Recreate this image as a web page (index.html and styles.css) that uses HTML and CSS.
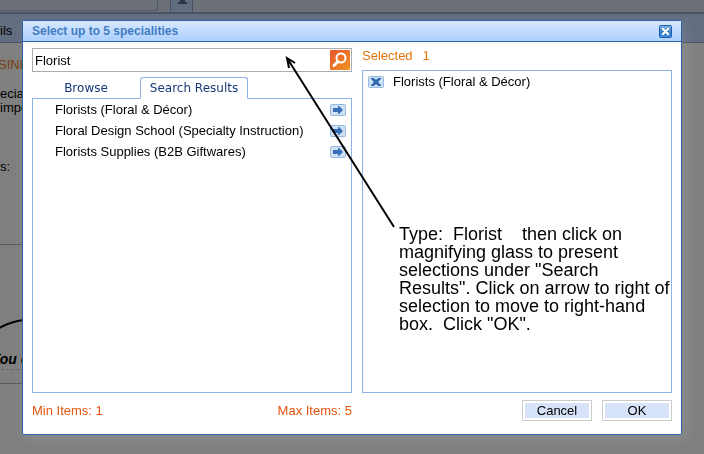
FILE: index.html
```html
<!DOCTYPE html>
<html lang="en">
<head>
  <meta charset="UTF-8">
  <meta name="viewport" content="width=device-width, initial-scale=1.0">
  <title>Select up to 5 specialities</title>
  <link rel="stylesheet" href="styles.css">
</head>
<body>
  <div class="page">
    <div class="page-top">
      <div class="page-panel"></div>
      <div class="page-toggle">
        <svg width="9" height="5" viewBox="0 0 9 5"><path d="M2 0h5v2h2v2H0V2h2z" fill="#5a6a90"/></svg>
      </div>
    </div>
    <div class="page-nav">ils</div>
    <div class="page-body">
      <h2 class="page-title">SINE</h2>
      <p class="page-text">ecial<br>impo</p>
      <p class="page-label">s:</p>
      <div class="page-banner">
        <svg class="banner-curve" width="60" height="20" viewBox="0 0 60 20"><path d="M-4 13Q8 5 24 3T60 1" fill="none" stroke="#000" stroke-width="2"/></svg>
        <span class="banner-text">You c</span>
      </div>
    </div>
  </div>

  <div class="overlay">
    <section class="dialog" role="dialog" aria-labelledby="dialogTitle">
      <header class="dialog-header">
        <h1 class="dialog-title" id="dialogTitle">Select up to 5 specialities</h1>
        <button type="button" class="close-button" aria-label="Close">
          <svg width="13" height="13" viewBox="0 0 13 13">
            <defs>
              <linearGradient id="closeFill" x2="0" y2="1">
                <stop offset="0" stop-color="#8db9e4"/>
                <stop offset=".5" stop-color="#3f83c8"/>
                <stop offset="1" stop-color="#3b8be0"/>
              </linearGradient>
            </defs>
            <rect x=".5" y=".5" width="12" height="12" rx="1" fill="url(#closeFill)" stroke="#1f5ba8"/>
            <path d="M3 3h2v1h1v1h1V4h1V3h2v2H9v1H8v1h1v1h1v2H8V9H7V8H6v1H5v1H3V8h1V7h1V6H4V5H3z" fill="#fff"/>
          </svg>
        </button>
      </header>

      <div class="dialog-body">
        <div class="column column-search">
          <form class="search-form">
            <input type="text" class="search-input" value="Florist" aria-label="Search specialities">
            <button type="button" class="search-button" aria-label="Search">
              <svg width="20" height="20" viewBox="0 0 20 20">
                <defs>
                  <linearGradient id="searchFill" x2="1" y2="1">
                    <stop offset="0" stop-color="#e8562a"/>
                    <stop offset="1" stop-color="#f09224"/>
                  </linearGradient>
                </defs>
                <rect width="20" height="20" rx="1" fill="url(#searchFill)"/>
                <circle cx="11" cy="8" r="4.5" fill="none" stroke="#fff" stroke-width="2"/>
                <path d="M8 11.5L4 15.5" stroke="#fff" stroke-width="3" stroke-linecap="round"/>
              </svg>
            </button>
          </form>
          <div class="tabs">
            <button type="button" class="tab">Browse</button>
            <button type="button" class="tab tab-active">Search Results</button>
            <span class="tab-rest"></span>
          </div>
          <ul class="list result-list" id="resultList">
            <li class="result-item">
              Florists (Floral &amp; Décor)
              <button type="button" class="icon-button" aria-label="Add Florists (Floral &amp; Décor)"><svg width="16" height="12" viewBox="0 0 16 12"><use href="#arrowIcon"/></svg></button>
            </li>
            <li class="result-item">
              Floral Design School (Specialty Instruction)
              <button type="button" class="icon-button" aria-label="Add Floral Design School"><svg width="16" height="12" viewBox="0 0 16 12"><use href="#arrowIcon"/></svg></button>
            </li>
            <li class="result-item">
              Florists Supplies (B2B Giftwares)
              <button type="button" class="icon-button" aria-label="Add Florists Supplies"><svg width="16" height="12" viewBox="0 0 16 12"><use href="#arrowIcon"/></svg></button>
            </li>
          </ul>
          <div class="limits">
            <span>Min Items: 1</span>
            <span>Max Items: 5</span>
          </div>
        </div>

        <div class="column column-selected">
          <div class="selected-title"><span>Selected</span><span>1</span></div>
          <ul class="list selected-list">
            <li class="selected-item">
              <button type="button" class="icon-button" aria-label="Remove Florists (Floral &amp; Décor)">
                <svg width="16" height="12" viewBox="0 0 16 12">
                  <rect x=".5" y=".5" width="15" height="11" rx="1" fill="#d0e1f4" stroke="#94b8e2"/>
                  <path d="M4 2h2l2 2 2-2h3v1l-3 3 3 3v1h-3L8 8l-2 2H3V9l3-3-3-3V2z" fill="#2f68b0"/>
                </svg>
              </button>
              Florists (Floral &amp; Décor)
            </li>
          </ul>
          <div class="actions">
            <button type="button" class="action-button">Cancel</button>
            <button type="button" class="action-button">OK</button>
          </div>
        </div>
      </div>
    </section>
  </div>

  <div class="note">
    <svg class="note-arrow" width="112" height="174" viewBox="0 0 112 174">
      <path d="M109 172L2 3M4 13L2 3L10 8" fill="none" stroke="#000" stroke-width="2"/>
    </svg>
    <p class="note-text">Type:&nbsp; Florist&nbsp; &nbsp; then click on<br>magnifying glass to present<br>selections under "Search<br>Results". Click on arrow to right of<br>selection to move to right-hand<br>box.&nbsp; Click "OK".</p>
  </div>

  <svg width="0" height="0" class="symbols" aria-hidden="true">
    <symbol id="arrowIcon" viewBox="0 0 16 12">
      <rect x=".5" y=".5" width="15" height="11" rx="1" fill="#d0e1f4" stroke="#94b8e2"/>
      <path d="M3 4h5V2h1l4 4-4 4H8V8H3z" fill="#376fb8"/>
    </symbol>
  </svg>

  <script>
    const resultList = document.getElementById('resultList');
    const selectedList = document.querySelector('.selected-list');

    // Copy the clicked result to the selected box
    resultList.addEventListener('click', (event) => {
      const button = event.target.closest('.icon-button');
      if (!button) return;
      const item = selectedList.querySelector('.selected-item').cloneNode(true);
      item.lastChild.textContent = button.parentElement.firstChild.textContent;
      selectedList.appendChild(item);
    });
  </script>
</body>
</html>
```

FILE: styles.css
```css
* {
  box-sizing: border-box;
}

body {
  margin: 0;
  min-height: 100vh;
  overflow: hidden;
  font-family: Arial, "Liberation Sans", sans-serif;
  font-size: 13px;
  color: #000;
  background-color: #fff;
}

button {
  font: inherit;
  color: inherit;
  padding: 0;
  border: 0;
  background: none;
}

svg {
  display: block;
}

ul, p, h1, h2 {
  margin: 0;
  padding: 0;
}

/* Page behind the dialog */
.page-top {
  display: flex;
  gap: 12px;
  height: 14px;
  background-color: #d6e3ee;
  border-bottom: 2px solid #8fa4cc;
}

.page-panel {
  width: 158px;
  height: 11px;
  border: solid #a3b6c6;
  border-width: 0 1px 1px 0;
  border-bottom-right-radius: 3px;
}

.page-toggle {
  width: 23px;
  padding-left: 7px;
  border: solid #8fa4cc;
  border-width: 0 1px;
  background-color: #c4daff;
}

.page-nav {
  height: 29px;
  line-height: 34px;
  background-color: #c4daff;
  border-bottom: 1px solid #8fa4cc;
}

.page-title {
  margin-left: -2px;
  padding-top: 13px;
  font-size: 13px;
  font-weight: normal;
  line-height: 18px;
  color: #f08020;
}

.page-text {
  padding-top: 13px;
  line-height: 14px;
}

.page-label {
  padding-top: 44px;
  line-height: 16px;
}

.page-banner {
  width: 90%;
  height: 140px;
  margin-top: 69px;
  border: solid #b4b4b4;
  border-width: 1px 0;
  overflow: hidden;
}

.banner-curve {
  margin-top: 72px;
}

.banner-text {
  display: block;
  margin-left: -9px;
  padding-top: 12px;
  font-size: 14px;
  font-style: italic;
  font-weight: bold;
  line-height: 20px;
  border-bottom: 1px dashed #ccc;
}

/* Dialog */
.overlay {
  position: fixed;
  inset: 0;
  display: flex;
  padding: 20px 22px 19px;
  background-color: rgba(0, 0, 0, 0.5);
}

.dialog {
  flex: 1;
  display: flex;
  flex-direction: column;
  border: 1px solid #2a64ac;
  border-radius: 2px;
  background-color: #fff;
  box-shadow: 4px 4px 12px rgba(255, 255, 255, 0.1);
}

.dialog-header {
  display: flex;
  align-items: center;
  justify-content: space-between;
  height: 21px;
  padding: 0 9px;
  border-bottom: 1px solid #2a64ac;
  background: linear-gradient(#d8e8ff, #acd0ff);
}

.dialog-title {
  font-size: 12px;
  color: #427cc0;
}

.dialog-body {
  flex: 1;
  display: flex;
  gap: 10px;
  padding: 6px 9px 13px;
}

.column {
  display: flex;
  flex-direction: column;
}

.column-search {
  flex: 32;
}

.column-selected {
  flex: 31;
}

.search-form {
  display: flex;
  align-items: center;
  height: 24px;
  padding: 0 1px 0 2px;
  border: 1px solid #adadad;
}

.search-input {
  flex: 1;
  min-width: 0;
  padding: 0;
  border: 0;
  outline: 0;
  font: inherit;
}

.tabs {
  display: flex;
  height: 27px;
  padding-top: 5px;
  font-family: Verdana, "DejaVu Sans", sans-serif;
  font-size: 12px;
  color: #15387a;
}

.tab {
  width: 108px;
  border-bottom: 1px solid #8db2e3;
}

.tab-active {
  border: 1px solid #8db2e3;
  border-bottom-color: #fff;
  border-radius: 3px 3px 0 0;
}

.tab-rest {
  flex: 1;
  border-bottom: 1px solid #8db2e3;
}

.list {
  flex: 1;
  list-style: none;
  border: 1px solid #8db2e3;
}

.result-list {
  padding-left: 22px;
  padding-right: 5px;
  border-top: 0;
}

.result-item {
  display: flex;
  align-items: center;
  justify-content: space-between;
  height: 21px;
}

.limits {
  display: flex;
  justify-content: space-between;
  height: 28px;
  padding-top: 7px;
  line-height: 21px;
  color: #e25410;
}

.selected-title {
  display: flex;
  gap: 10px;
  height: 22px;
  line-height: 16px;
  color: #e8740c;
}

.selected-item {
  display: flex;
  align-items: center;
  gap: 9px;
  height: 21px;
  padding-left: 5px;
}

.actions {
  display: flex;
  justify-content: flex-end;
  gap: 10px;
  height: 28px;
  padding-top: 7px;
}

.action-button {
  width: 70px;
  padding: 2px;
  border: 1px solid #ccc;
  background: #d7e3f8 content-box;
}

/* Instruction drawn over the dialog */
.note-arrow {
  position: absolute;
  left: 285px;
  top: 55px;
  pointer-events: none;
}

.note-text {
  position: absolute;
  left: 399px;
  top: 225px;
  font-size: 18px;
  line-height: 18px;
  white-space: nowrap;
}

.symbols {
  position: absolute;
}
```
